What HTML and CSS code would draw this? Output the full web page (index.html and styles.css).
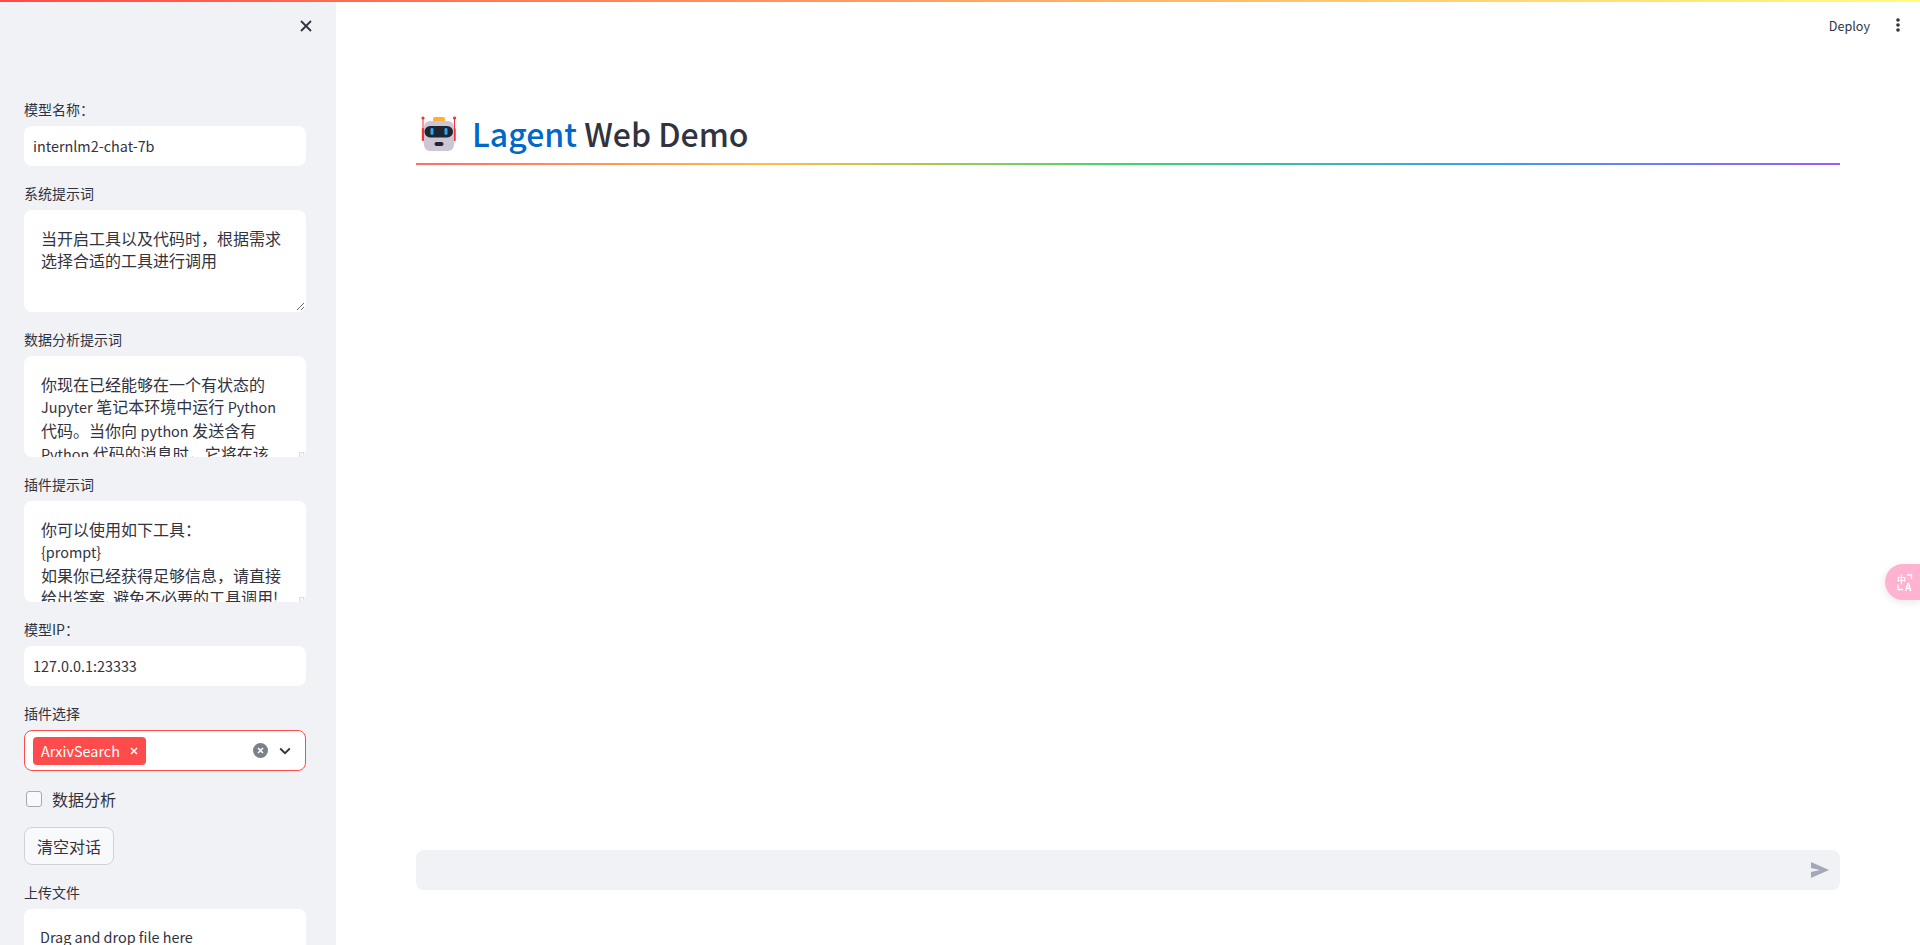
FILE: index.html
```html
<!DOCTYPE html>
<html lang="zh">
<head>
<meta charset="utf-8">
<title>Lagent Web Demo</title>
<link rel="stylesheet" href="styles.css">
</head>
<body>
<div class="topbar"></div>
<div class="app">
  <aside class="sidebar">
    <div class="side-head">
      <svg class="close" width="12" height="12" viewBox="0 0 12 12"><path d="M1 1l10 10M11 1L1 11" fill="none" stroke="#31333f" stroke-width="1.8"/></svg>
    </div>
    <div class="field">
      <div class="label">模型名称：</div>
      <input class="input" value="internlm2-chat-7b">
    </div>
    <div class="field">
      <div class="label">系统提示词</div>
      <div class="area">当开启工具以及代码时，根据需求选择合适的工具进行调用
        <svg class="grip" width="9" height="9" viewBox="0 0 9 9"><path d="M1 8l7-7M5 8l3-3" fill="none" stroke="#666" stroke-width="1"/></svg>
      </div>
    </div>
    <div class="field">
      <div class="label">数据分析提示词</div>
      <div class="area short"><div class="clip">你现在已经能够在一个有状态的 <span class="lat">Jupyter</span> 笔记本环境中运行 <span class="lat">Python</span> 代码。当你向 <span class="lat">python</span> 发送含有 <span class="lat">Python</span> 代码的消息时，它将在该</div>
        <span class="corner"></span>
      </div>
    </div>
    <div class="field">
      <div class="label">插件提示词</div>
      <div class="area short"><div class="clip">你可以使用如下工具：<br><span class="lat">{prompt}</span><br>如果你已经获得足够信息，请直接给出答案. 避免不必要的工具调用!</div>
        <span class="corner"></span>
      </div>
    </div>
    <div class="field">
      <div class="label">模型IP：</div>
      <input class="input" value="127.0.0.1:23333">
    </div>
    <div class="field">
      <div class="label">插件选择</div>
      <div class="multi">
        <span class="tag">ArxivSearch<svg class="tag-x" width="8" height="8" viewBox="0 0 8 8"><path d="M1 1l6 6M7 1L1 7" fill="none" stroke="#fff" stroke-width="1.5"/></svg></span>
        <span class="multi-tools">
          <svg width="15" height="15" viewBox="0 0 15 15"><circle cx="7.5" cy="7.5" r="7.5" fill="#7c7f8c"/><path d="M5 5l5 5M10 5l-5 5" stroke="#fff" stroke-width="1.6"/></svg>
          <svg width="12" height="8" viewBox="0 0 12 8"><path d="M1.2 1.5L6 6.2l4.8-4.7" fill="none" stroke="#31333f" stroke-width="1.8"/></svg>
        </span>
      </div>
    </div>
    <label class="check"><span class="box"></span>数据分析</label>
    <button class="btn">清空对话</button>
    <div class="field">
      <div class="label">上传文件</div>
      <div class="upload">
        <div class="up-title">Drag and drop file here</div>
        <div class="up-sub">Limit 200MB per file</div>
      </div>
    </div>
  </aside>
  <main class="main">
    <header class="top">
      <span class="deploy">Deploy</span>
      <svg width="4" height="14" viewBox="0 0 4 14"><circle cx="2" cy="2" r="1.8" fill="#31333f"/><circle cx="2" cy="7" r="1.8" fill="#31333f"/><circle cx="2" cy="12" r="1.8" fill="#31333f"/></svg>
    </header>
    <div class="content">
      <h2 class="title">
        <svg class="robot" width="36" height="36" viewBox="0 0 36 36">
          <path d="M3 3v22M34.500 3v22" stroke="#f8312f" stroke-width="1" fill="none"/>
          <circle cx="3" cy="3" r="1.6" fill="#f8312f"/><circle cx="34.500" cy="3" r="1.6" fill="#f8312f"/>
          <rect x="1.800" y="13" width="2.500" height="13" rx="1" fill="#f8312f"/><rect x="33.200" y="13" width="2.500" height="13" rx="1" fill="#f8312f"/>
          <rect x="13" y="2" width="12" height="5" rx="2" fill="#ffb02e"/>
          <rect x="4" y="6" width="30" height="30" rx="6" fill="#cdc4d6"/>
          <rect x="4.500" y="11" width="28.500" height="11.500" rx="5.700" fill="#1c2530"/>
          <rect x="10.500" y="13" width="3" height="7" rx="1.400" fill="#2aa7f2"/>
          <rect x="24.500" y="13" width="3" height="7" rx="1.400" fill="#2aa7f2"/>
          <rect x="14.500" y="27" width="9" height="4" rx="2" fill="#1c2530"/>
        </svg>
        <span class="title-text"><span class="blue">Lagent</span> Web Demo</span>
      </h2>
      <div class="rainbow"></div>
    </div>
    <div class="chat">
      <svg width="18" height="16" viewBox="0 0 18 16"><path d="M0 0l18 8L0 16l0-6 9-2-9-2z" fill="#a3a8b8"/></svg>
    </div>
  </main>
</div>
<div class="translate">
  <svg width="17" height="17" viewBox="0 0 17 17"><text x="0" y="8.500" class="tr-zh">中</text><text x="8" y="16.500" class="tr-a">A</text><path d="M10 1h4.500v4M1 10.500V15.500h5" fill="none" stroke="#fff" stroke-width="1.300"/></svg>
</div>
</body>
</html>
```
FILE: styles.css
```css
* { box-sizing: border-box; }
html, body { margin: 0; height: 100%; overflow: hidden; background: #fff; }
body { font-family: "Noto Sans CJK SC", "Noto Sans", sans-serif; color: #31333f; font-size: 14px; }
.topbar { height: 2px; background: linear-gradient(90deg, #ff4b4b, #fffd80); }
.app { display: flex; height: 943px; }
.sidebar { width: 336px; flex: none; background: #f0f2f6; padding: 0 30px 0 24px; overflow: hidden; display: flex; flex-direction: column; gap: 16px; }
.side-head { height: 80px; flex: none; display: flex; justify-content: flex-end; padding-top: 18px; margin-right: -6px; }
.field { flex: none; display: flex; flex-direction: column; }
.label { height: 28px; line-height: 22px; font-size: 14px; }
.input { height: 40px; border: 0; border-radius: 8px; background: #fff; padding: 0 9px; font: 14.4px/40px "Noto Sans CJK SC", sans-serif; color: #31333f; width: 100%; outline: none; }
.area { position: relative; height: 102px; background: #fff; border-radius: 8px; padding: 17px 24px 0 17px; font-size: 16px; line-height: 22.4px; overflow: hidden; }
.area.short { height: 101px; }
.lat { font-size: 14.4px; }
.clip { height: 84px; overflow: hidden; }
.grip { position: absolute; right: 1px; bottom: 1px; }
.corner { position: absolute; right: 2px; bottom: 0; width: 5px; height: 5px; border: 1px solid #ddd; background: #f6f6f6; }
.multi { height: 41px; border: 1px solid #ff4b4b; border-radius: 8px; background: #fff; display: flex; align-items: center; justify-content: space-between; padding: 0 14px 0 8px; }
.tag { height: 28px; background: #ff4b4b; color: #fff; border-radius: 4px; display: flex; align-items: center; padding: 0 8px 0 8px; font-size: 14.4px; gap: 10px; }
.multi-tools { display: flex; align-items: center; gap: 11px; }
.check { height: 24px; flex: none; display: flex; align-items: center; font-size: 16px; gap: 10px; padding-left: 2px; }
.box { width: 16px; height: 16px; border: 1px solid #a6a9b3; border-radius: 3px; background: #f8f9fb; }
.btn { flex: none; align-self: flex-start; width: 90px; height: 38px; border: 1px solid #d0d2d8; border-radius: 8px; background: #f8f9fb; color: #31333f; font: 16px/34px "Noto Sans CJK SC", sans-serif; padding: 0; }
.upload { height: 150px; background: #fff; border-radius: 8px; padding: 16px; }
.up-title { font-size: 14.4px; line-height: 24px; }
.up-sub { font-size: 11px; color: #808495; line-height: 18px; }
.main { flex: 1; min-width: 0; display: flex; flex-direction: column; padding-bottom: 55px; }
.top { height: 46px; display: flex; align-items: center; justify-content: flex-end; padding-right: 20px; gap: 26px; }
.deploy { font-size: 12.6px; }
.content { flex: 1; padding: 60px 80px 0; }
.title { margin: 0; height: 55px; padding-bottom: 6px; display: flex; align-items: center; font-size: 32px; font-weight: 500; line-height: 42px; color: #31333f; }
.title-text { white-space: pre; }
.robot { margin: 0 16px 0 4px; flex: none; }
.blue { color: #0068c9; }
.rainbow { height: 2px; background: linear-gradient(90deg, #ff6c6c, #ffbd45, #3dd56d, #3d9df3, #9a5dff); }
.chat { margin: 0 80px; height: 40px; border-radius: 8px; background: #f0f2f6; display: flex; align-items: center; justify-content: flex-end; padding-right: 11px; }
.translate { position: fixed; right: 0; top: 564px; width: 35px; height: 36px; border-radius: 18px 0 0 18px; background: #ffb3d1; box-shadow: 0 2px 8px rgba(0,0,0,.1); display: flex; align-items: center; padding-left: 12px; }
.tr-zh { font-size: 9px; fill: #fff; font-weight: 700; }
.tr-a { font-size: 10px; fill: #fff; font-weight: 700; }
```
